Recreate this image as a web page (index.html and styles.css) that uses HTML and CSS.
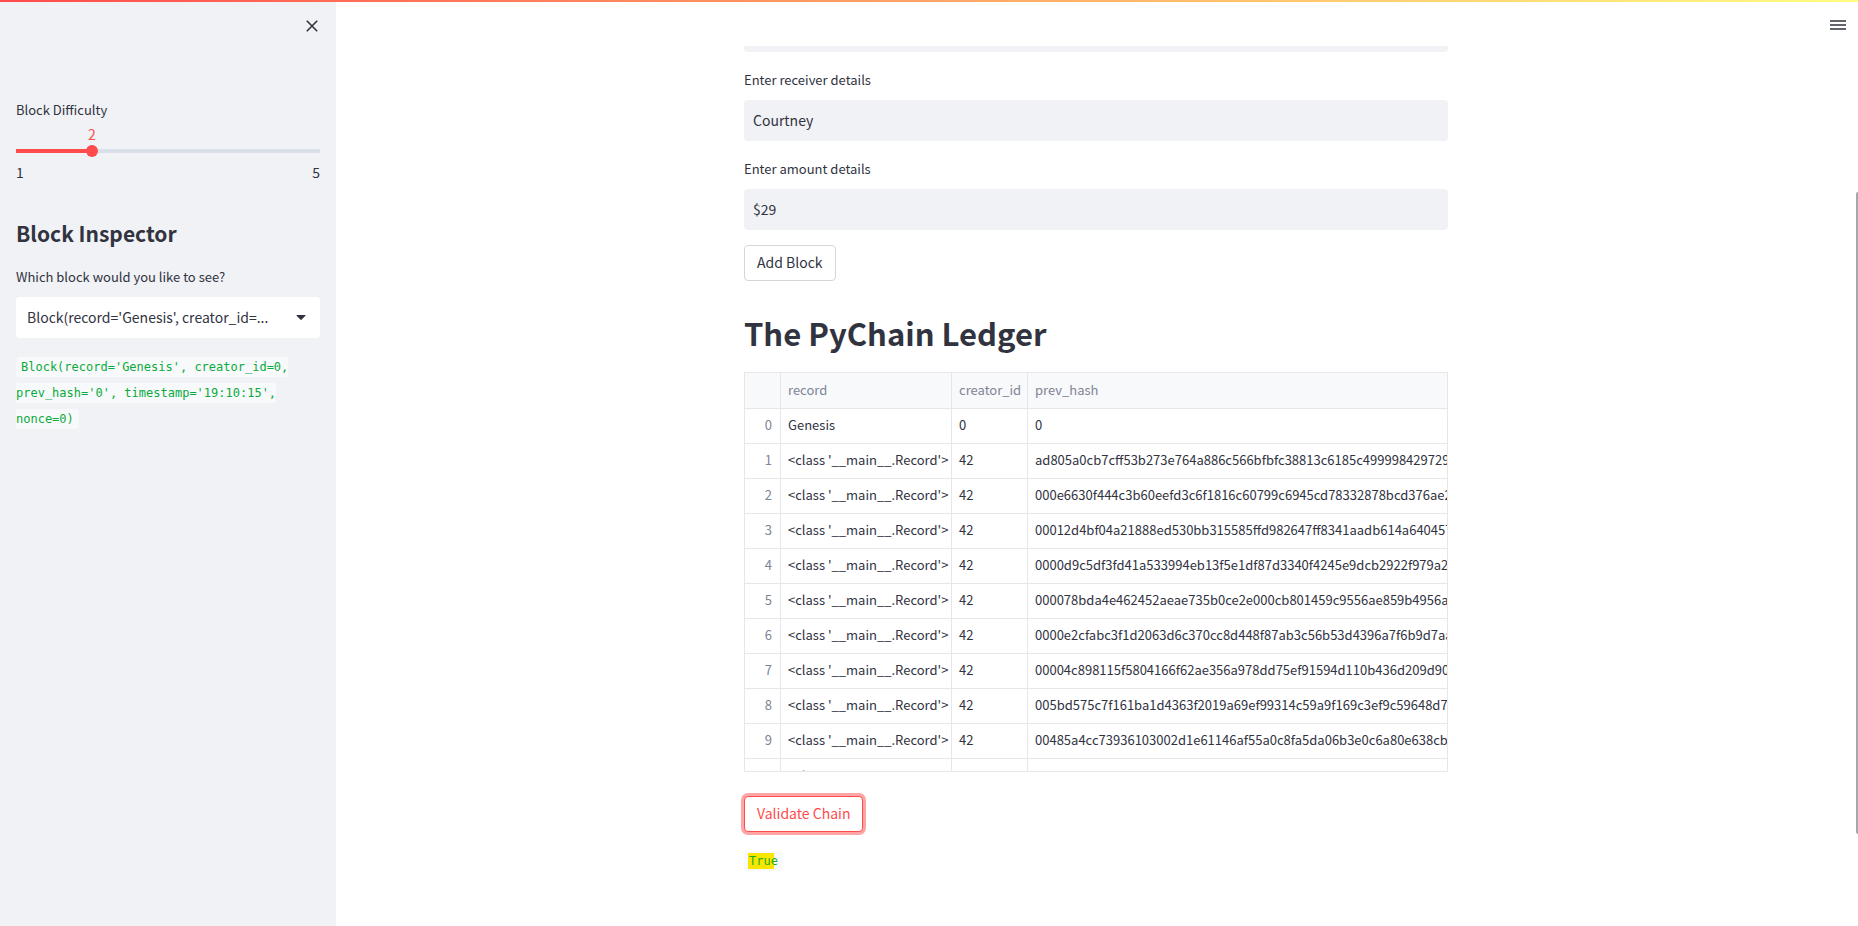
FILE: index.html
```html
<!DOCTYPE html>
<html lang="en">
<head>
<meta charset="utf-8">
<title>PyChain</title>
<link rel="stylesheet" href="styles.css">
</head>
<body>
<div class="decoration"></div>
<div class="app">
  <aside class="sidebar">
    <button class="close" aria-label="Close sidebar">
      <svg viewBox="0 0 12 12" width="12" height="12"><path d="M.8 .8 11.200 11.200M11.200 .8 .8 11.200" fill="none" stroke="#31333f" stroke-width="1.600"/></svg>
    </button>
    <div class="slider">
      <label class="label" for="difficulty">Block Difficulty</label>
      <div class="slider-value"><output for="difficulty">2</output></div>
      <input id="difficulty" class="range" type="range" min="1" max="5" value="2">
      <div class="ticks"><span>1</span><span>5</span></div>
    </div>
    <h2 class="side-title">Block Inspector</h2>
    <label class="label" for="block">Which block would you like to see?</label>
    <div class="select-wrap">
      <select id="block" class="select"><option>Block(record='Genesis', creator_id=...</option></select>
      <svg class="caret" viewBox="0 0 10 5" width="10" height="5"><path d="M1 0H9Q10 0 9.400 .8L5.700 4.600Q5 5.200 4.300 4.600L.6 .8Q0 0 1 0Z" fill="#31333f"/></svg>
    </div>
    <p class="code-line"><code>Block(record='Genesis', creator_id=0, prev_hash='0', timestamp='19:10:15', nonce=0)</code></p>
  </aside>
  <div class="page">
    <header class="toolbar">
      <button class="menu" aria-label="Menu">
        <svg viewBox="0 0 16 10" width="16" height="10"><path d="M0 1H16M0 5H16M0 9H16" stroke="#31333f" stroke-width="1.600"/></svg>
      </button>
    </header>
    <main class="content">
      <div class="clipped"><input class="input" type="text" aria-label="Enter sender details"></div>
      <div class="field">
        <label class="label" for="receiver">Enter receiver details</label>
        <input id="receiver" class="input" type="text" value="Courtney">
      </div>
      <div class="field">
        <label class="label" for="amount">Enter amount details</label>
        <input id="amount" class="input" type="text" value="$29">
      </div>
      <button class="btn">Add Block</button>
      <h1 class="title">The PyChain Ledger</h1>
      <div class="table-wrap">
        <table class="ledger">
          <colgroup><col class="c-index"><col class="c-record"><col class="c-creator"><col class="c-hash"></colgroup>
          <thead><tr><th></th><th>record</th><th>creator_id</th><th>prev_hash</th></tr></thead>
          <tbody>
            <tr><th>0</th><td>Genesis</td><td>0</td><td>0</td></tr>
            <tr><th>1</th><td>&lt;class '__main__.Record'&gt;</td><td>42</td><td>ad805a0cb7cff53b273e764a886c566bfbfc38813c6185c499998429729ffb</td></tr>
            <tr><th>2</th><td>&lt;class '__main__.Record'&gt;</td><td>42</td><td>000e6630f444c3b60eefd3c6f1816c60799c6945cd78332878bcd376ae27a</td></tr>
            <tr><th>3</th><td>&lt;class '__main__.Record'&gt;</td><td>42</td><td>00012d4bf04a21888ed530bb315585ffd982647ff8341aadb614a64045733</td></tr>
            <tr><th>4</th><td>&lt;class '__main__.Record'&gt;</td><td>42</td><td>0000d9c5df3fd41a533994eb13f5e1df87d3340f4245e9dcb2922f979a228</td></tr>
            <tr><th>5</th><td>&lt;class '__main__.Record'&gt;</td><td>42</td><td>000078bda4e462452aeae735b0ce2e000cb801459c9556ae859b4956a9b</td></tr>
            <tr><th>6</th><td>&lt;class '__main__.Record'&gt;</td><td>42</td><td>0000e2cfabc3f1d2063d6c370cc8d448f87ab3c56b53d4396a7f6b9d7aac8</td></tr>
            <tr><th>7</th><td>&lt;class '__main__.Record'&gt;</td><td>42</td><td>00004c898115f5804166f62ae356a978dd75ef91594d110b436d209d90d6</td></tr>
            <tr><th>8</th><td>&lt;class '__main__.Record'&gt;</td><td>42</td><td>005bd575c7f161ba1d4363f2019a69ef99314c59a9f169c3ef9c59648d710</td></tr>
            <tr><th>9</th><td>&lt;class '__main__.Record'&gt;</td><td>42</td><td>00485a4cc73936103002d1e61146af55a0c8fa5da06b3e0c6a80e638cb7e</td></tr>
            <tr><th>10</th><td>&lt;class '__main__.Record'&gt;</td><td>42</td><td>000b3fd6bfb05218390472615039f4f720b61538204f7b308b4bbb61f29</td></tr>
          </tbody>
        </table>
      </div>
      <button class="btn btn-active">Validate Chain</button>
      <p class="code-line"><code><mark>True</mark></code></p>
    </main>
    <div class="scroll-thumb"></div>
  </div>
</div>
</body>
</html>
```
FILE: styles.css
```css
* { box-sizing: border-box; }
body {
  margin: 0;
  background: #fff;
  color: #31333f;
  font-family: "Noto Sans CJK SC", "Noto Sans", sans-serif;
  font-size: 14px;
  line-height: 24px;
}
button, input, select { font: inherit; color: inherit; }
h1, h2, p { margin: 0; }
.decoration {
  position: absolute;
  top: 0; left: 0; right: 0;
  height: 2px;
  background: linear-gradient(90deg, #ff4b4b, #fffd80);
  z-index: 2;
}
.app { display: flex; height: 100vh; overflow: hidden; }
.sidebar {
  flex: 0 0 336px;
  background: #f0f2f6;
  padding: 20px 16px;
}
.close, .menu { border: 0; background: none; padding: 0; display: block; line-height: 0; }
.close { margin-left: auto; margin-right: 2px; }
.label { display: block; font-size: 13px; line-height: 24px; }
.slider { margin-top: 66px; }
.slider-value {
  width: 50%;
  text-align: center;
  color: #ff4b4b;
}
.range {
  appearance: none;
  display: block;
  width: calc(100% + 12px);
  height: 12px;
  margin: -1px -6px 3px;
  background: linear-gradient(90deg, #ff4b4b 25%, #dadfe9 25%) center / calc(100% - 12px) 4px no-repeat;
}
.range::-webkit-slider-thumb {
  appearance: none;
  width: 12px;
  height: 12px;
  border-radius: 50%;
  background: #ff4b4b;
}
.ticks { display: flex; justify-content: space-between; }
.side-title { font-size: 21px; line-height: 32px; font-weight: 600; margin: 33px 0 16px; }
.select-wrap { position: relative; margin-top: 8px; }
.select {
  appearance: none;
  display: block;
  width: 100%;
  height: 41px;
  border: 0;
  border-radius: 4px;
  background: #fff;
  padding: 0 40px 2px 11px;
}
.caret { position: absolute; right: 14px; top: 18px; }
.code-line {
  margin-top: 16px;
  font-family: "DejaVu Sans Mono", monospace;
  font-size: 12px;
  line-height: 26px;
}
code {
  font: inherit;
  color: #09ab3b;
  background: #f8f9fb;
  border-radius: 4px;
  padding: 3px 5px;
}
.page { flex: 1; min-width: 0; position: relative; padding-right: 2px; }
.toolbar {
  height: 46px;
  display: flex;
  justify-content: flex-end;
  align-items: flex-start;
  padding: 20px 10px 0;
}
.content { max-width: 736px; margin: 0 auto; padding: 0 16px; }
.clipped { height: 6px; overflow: hidden; display: flex; align-items: flex-end; }
.input {
  display: block;
  width: 100%;
  height: 41px;
  border: 0;
  border-radius: 4px;
  background: #f0f2f6;
  padding: 0 9px 2px;
}
.field { display: grid; gap: 8px; margin-top: 16px; }
.btn {
  display: block;
  height: 36px;
  margin-top: 15px;
  padding: 0 12px 2px;
  border: 1px solid #d6d6d9;
  border-radius: 4px;
  background: #fff;
}
.title { font-size: 31px; line-height: 44px; font-weight: 600; margin: 30px 0 17px; }
.table-wrap { height: 400px; overflow: hidden; border: 1px solid #e6e7ea; }
.ledger {
  width: 100%;
  table-layout: fixed;
  border-collapse: separate;
  border-spacing: 0;
  font-size: 13px;
  line-height: 18px;
}
.ledger th, .ledger td {
  height: 35px;
  padding: 0 7px 2px;
  border: solid #e6e7ea;
  border-width: 0 1px 1px 0;
  text-align: left;
  font-weight: 400;
  white-space: nowrap;
}
.ledger tr > :last-child { border-right: 0; overflow: hidden; }
.ledger th { color: #808495; }
.ledger thead th { background: #f8f9fb; height: 36px; }
.ledger tbody th { text-align: right; padding-right: 8px; }
.ledger tbody tr:last-child > * { padding-bottom: 1px; }
.c-index { width: 36px; }
.c-record { width: 171px; }
.c-creator { width: 76px; }
.btn-active {
  margin-top: 24px;
  color: #ff4b4b;
  border-color: #ff4b4b;
  box-shadow: 0 0 0 3px #ffa5a5;
}
mark {
  background: linear-gradient(90deg, #f8e600 26px, transparent 26px);
  color: #1fae1a;
  margin: 0 -1px;
  padding: 1px;
}
.scroll-thumb {
  position: absolute;
  right: 0;
  top: 192px;
  width: 2px;
  height: 642px;
  border-radius: 2px 0 0 2px;
  background: #a5a6ae;
}
```
